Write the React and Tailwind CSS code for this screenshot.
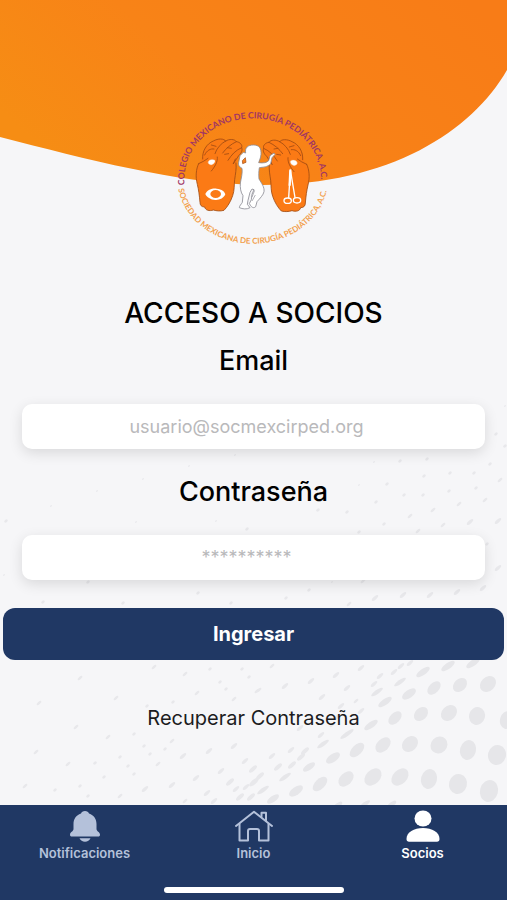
import React from "react";

// [cx, cy, rx, ry] of the large halftone dots
const bigDots = [
  [488, 684, 9, 7], [460, 685, 8, 6], [434, 688, 8, 5], [409, 694, 8, 4], [385, 702, 8, 3], [507, 720, 7, 9],
  [477, 716, 8, 9], [449, 713, 9, 7], [421, 714, 8, 6], [395, 718, 8, 5], [371, 725, 8, 3], [347, 734, 8, 2], [323, 744, 7, 2],
  [497, 755, 9, 10], [468, 750, 8, 10], [439, 745, 9, 8], [410, 744, 9, 7], [383, 745, 9, 6], [357, 750, 9, 5], [333, 758, 8, 4],
  [309, 767, 7, 3], [285, 777, 7, 2], [263, 790, 7, 2],
  [489, 791, 9, 11], [458, 784, 9, 10], [429, 779, 8, 10], [400, 777, 10, 7], [373, 777, 10, 7], [346, 779, 9, 6], [320, 784, 9, 5],
  [296, 791, 8, 4], [273, 799, 7, 3], [473, 663, 8, 3], [448, 666, 8, 3], [423, 672, 8, 3], [400, 682, 7, 2], [377, 692, 7, 2],
  [365, 804, 6, 2], [392, 804, 5, 2], [338, 805, 5, 2],
];

// [cx, cy, rx] of the small halftone dots
const smallDots = [
  [403, 595, 4], [430, 595, 4], [457, 592, 4], [375, 598, 4], [349, 604, 3], [483, 588, 4], [272, 666, 3], [361, 668, 4], [336, 675, 4],
  [311, 681, 4], [285, 686, 4], [259, 690, 3], [347, 688, 4], [322, 697, 4], [361, 711, 4], [337, 717, 4], [300, 728, 4],
  [80, 678, 3], [154, 667, 3], [185, 674, 3], [39, 703, 3], [116, 698, 3], [76, 727, 3], [36, 752, 3], [108, 737, 3], [68, 764, 3],
  [25, 786, 3], [55, 790, 2], [95, 763, 2], [120, 757, 2], [134, 734, 2], [147, 706, 2], [173, 702, 2], [197, 693, 3], [210, 669, 2],
  [220, 682, 2], [242, 669, 2], [249, 677, 2], [226, 689, 2], [234, 699, 3], [257, 691, 3], [144, 746, 2], [150, 754, 2], [128, 766, 2],
  [165, 749, 2], [172, 741, 3], [183, 756, 4], [209, 751, 4], [234, 746, 4], [158, 764, 3], [134, 774, 2], [196, 778, 4], [221, 771, 4],
  [245, 761, 4], [172, 785, 4], [145, 789, 4], [120, 796, 3], [104, 777, 2], [80, 786, 2], [88, 796, 2], [207, 793, 4], [230, 782, 5],
  [185, 801, 3], [214, 801, 4], [236, 789, 4], [246, 787, 4], [253, 769, 5], [260, 776, 5], [240, 797, 5], [254, 782, 6], [251, 797, 5],
  [272, 756, 4], [291, 750, 4], [305, 751, 5], [301, 757, 5], [278, 767, 5], [292, 765, 5], [321, 735, 4], [332, 725, 3], [341, 706, 4],
  [356, 701, 3], [374, 684, 4], [380, 676, 4], [394, 672, 4], [401, 666, 4], [410, 663, 4],
  [6, 521, 2], [51, 506, 1], [97, 491, 1], [143, 479, 1], [136, 522, 1], [216, 521, 1], [247, 529, 2], [4, 575, 1], [88, 582, 2],
  [43, 602, 2], [123, 603, 2], [198, 593, 2], [231, 603, 2], [318, 510, 2], [347, 512, 2], [376, 502, 2], [404, 495, 2], [384, 524, 2],
  [359, 532, 2], [410, 516, 3], [418, 531, 3], [433, 510, 3], [443, 525, 3], [459, 504, 3], [470, 522, 4], [485, 500, 3], [498, 521, 4],
  [500, 480, 3], [476, 488, 2], [449, 491, 2], [423, 495, 2], [424, 476, 2], [450, 473, 2], [474, 473, 2], [387, 484, 2], [359, 485, 1],
  [286, 598, 2], [309, 590, 2], [332, 582, 1], [363, 581, 3], [498, 568, 4], [490, 464, 2], [427, 459, 2], [400, 461, 2], [374, 462, 1],
  [496, 434, 2], [505, 446, 2], [505, 406, 1], [235, 455, 1], [189, 466, 1], [487, 544, 2],
];

function Background() {
  return (
    <svg
      aria-hidden="true"
      className="absolute inset-0 h-full w-full"
      viewBox="0 0 507 900"
      preserveAspectRatio="none"
    >
      <defs>
        <linearGradient id="orange" x1="0" y1="0.6" x2="1" y2="0.2">
          <stop offset="0" stopColor="#f68d14" />
          <stop offset="0.4" stopColor="#f88317" />
          <stop offset="1" stopColor="#f87c17" />
        </linearGradient>
      </defs>
      <path d="M0 0H507V70C472 131 390 185 262 185C180 184 90 160 0 137Z" fill="url(#orange)" />
      <g fill="#e6e6e9">
        {bigDots.map(([x, y, rx, ry]) => (
          <ellipse key={`${x}-${y}`} cx={x} cy={y} rx={rx} ry={ry} transform={`rotate(${ry > rx ? 15 : ry > 4 ? -45 : -35} ${x} ${y})`} />
        ))}
      </g>
      <g fill="#e8e8eb">
        {smallDots.map(([x, y, r]) => (
          <ellipse key={`${x}-${y}`} cx={x} cy={y} rx={r} ry={r > 2 ? r * 0.4 : r * 0.7} transform={`rotate(-42 ${x} ${y})`} />
        ))}
      </g>
    </svg>
  );
}

function Hand() {
  return (
    <g stroke="#a04a12" strokeWidth="2.5" strokeLinejoin="round" strokeLinecap="round">
      <path
        fill="#fb7a15"
        stroke="none"
        d="M108 322C106 300 104 285 100 268C94 245 96 222 104 206C112 198 114 190 116 178C120 158 134 144 150 137C162 129 180 128 184 137C196 131 212 132 217 140C228 141 236 150 234 158C236 168 232 172 226 178C222 188 220 196 216 204C218 222 214 238 212 254C210 272 212 284 206 302C200 320 190 336 180 346C168 349 158 348 148 345C136 349 124 346 122 336C112 336 108 330 108 322Z"
      />
      <path
        fill="none"
        d="M104 206C96 222 94 245 100 268C104 285 106 300 108 322C108 330 112 336 122 336C124 346 136 349 148 345C158 348 168 349 180 346C190 336 200 320 206 302C212 284 210 272 212 254C214 238 218 222 216 204"
      />
      <path
        fill="none"
        d="M116 192C114 168 128 146 148 138C162 130 180 130 185 138M185 138C196 131 212 132 217 140C228 141 236 150 233 158C237 168 230 176 224 182L208 206M185 138C170 146 158 160 153 176M217 140C200 148 186 160 176 174M233 158C214 166 202 180 192 196M122 180C128 166 140 160 150 162M104 206C114 202 124 196 132 190M160 186C162 200 152 216 142 228M142 150L156 154M190 158L202 160M182 178L194 176M208 206L214 192"
      />
      <path fill="#fff" stroke="#f4b183" strokeWidth="1" d="M132 202C133 194 144 191 152 195C156 201 149 208 141 210C136 209 132 206 132 202Z" />
    </g>
  );
}

function Logo() {
  return (
    <svg
      role="img"
      aria-label="Colegio Mexicano de Cirugía Pediátrica"
      viewBox="0 0 540 480"
      className="h-40 w-[180px] font-['Lato',sans-serif]"
    >
      <defs>
        <path id="ringTop" d="M62 270A205 182 0 1 1 470 270" />
        <path id="ringBottom" d="M43 282A226 196 0 0 0 489 282" />
      </defs>
      <text fill="#a03565" fontSize="26" fontWeight="700">
        <textPath href="#ringTop">COLEGIO MEXICANO DE CIRUGÍA PEDIÁTRICA, A.C.</textPath>
      </text>
      <text fill="#f2a04c" fontSize="24" fontWeight="700">
        <textPath href="#ringBottom">SOCIEDAD MEXICANA DE CIRUGÍA PEDIÁTRICA, A.C.</textPath>
      </text>
      <Hand />
      <g transform="translate(532 2) scale(-1 1)">
        <Hand />
      </g>
      <path
        fill="#fff"
        fillRule="evenodd"
        d="M124 297C130 284 146 279 158 281C174 282 182 290 184 298C180 309 166 316 154 315C140 314 128 307 124 297ZM139 297A16 12 0 1 0 171 297A16 12 0 1 0 139 297Z"
      />
      <g fill="none" stroke="#fff" strokeWidth="4" strokeLinecap="round">
        <path strokeWidth="7" d="M379 226L377 270" />
        <path d="M379 230L374 308M380 230L393 308" />
        <ellipse cx="371" cy="317" rx="11" ry="8" />
        <ellipse cx="399" cy="316" rx="11" ry="8" />
      </g>
      <path
        fill="#fff"
        stroke="#8b8b94"
        strokeWidth="2.5"
        strokeLinejoin="round"
        d="M245 174C242 158 252 150 268 150C286 150 292 160 291 178C290 190 286 196 284 203C298 205 308 203 314 197L318 182L330 174L333 178L324 188L320 206C310 217 298 216 286 218C284 230 284 240 285 252C292 264 302 276 300 290C298 300 288 310 279 320L275 335C270 340 264 338 260 332L256 326L262 314L264 298L270 284L264 282L258 292L252 316L250 328L258 338C248 344 236 342 226 338C226 332 232 328 235 322L237 302C230 292 228 278 229 264C232 248 236 234 234 220C226 216 222 210 224 202L228 182L238 172Z"
      />
      <path d="M244 188L235 197L236 206L246 202Z" fill="#f58220" stroke="#a04a12" strokeWidth="2" />
      <path d="M272 286L264 306M274 300L264 318" stroke="#8b8b94" strokeWidth="2" />
    </svg>
  );
}

function BellIcon() {
  return (
    <svg viewBox="0 0 32 32" className="h-8 w-8" fill="currentColor" aria-hidden="true">
      <path d="M16 1C18 1 19.600 2 20 3.400C25 5 27.500 9 27.500 14V19C27.500 21.500 31 22 31 24.500C31 26 30.500 26.600 29 26.600H3C1.500 26.600 1 26 1 24.500C1 22 4.500 21.500 4.500 19V14C4.500 9 7 5 12 3.400C12.400 2 14 1 16 1Z" />
      <path d="M10.500 28.300H21.500C20.500 30.700 18.500 31.700 16 31.700C13.500 31.700 11.500 30.700 10.500 28.300Z" />
    </svg>
  );
}

function HomeIcon() {
  return (
    <svg viewBox="0 0 40 32" className="h-8 w-10" fill="none" stroke="currentColor" strokeWidth="2" strokeLinejoin="round" strokeLinecap="round" aria-hidden="true">
      <path d="M5.500 14V30.500H14V21C14 19.800 14.800 19 16 19H23C24.200 19 25 19.800 25 21V30.500H34.500V14" />
      <path d="M2 16L20 1.800L38 16" />
      <path d="M27.500 6.500V2.800H32V10.500" />
    </svg>
  );
}

function PersonIcon() {
  return (
    <svg viewBox="0 0 34 32" className="h-8 w-[34px]" fill="currentColor" aria-hidden="true">
      <ellipse cx="17" cy="8.500" rx="8.500" ry="8" />
      <path d="M0.500 29C0.500 22 8 18 17 18S33.500 22 33.500 29C33.500 31 32.500 31.700 31 31.700H3C1.500 31.700 0.500 31 0.500 29Z" />
    </svg>
  );
}

const tabs = [
  { label: "Notificaciones", Icon: BellIcon, color: "text-[#b4c1da]" },
  { label: "Inicio", Icon: HomeIcon, color: "text-[#b4c1da]" },
  { label: "Socios", Icon: PersonIcon, color: "text-white" },
];

const fieldClass =
  "h-[45px] w-full rounded-[10px] bg-white pr-[14px] text-center text-lg text-black shadow-[0_4px_14px_rgba(0,0,0,0.12)] outline-none placeholder:text-[#b9b9bb]";

export default function App() {
  return (
    <div className="relative flex min-h-screen flex-col bg-[#f6f6f8] font-['Inter',sans-serif] text-black">
      <Background />
      <main className="relative flex grow flex-col items-center pt-[95px]">
        <Logo />
        <form className="flex w-full flex-col items-center pt-10" onSubmit={(e) => e.preventDefault()}>
          <h1 className="text-[28px] leading-9 font-medium">ACCESO A SOCIOS</h1>
          <div className="flex w-full flex-col items-center gap-[25px] px-[22px] pt-3">
            <label htmlFor="email" className="text-[27px] leading-9 font-medium">Email</label>
            <input id="email" type="email" placeholder="usuario@socmexcirped.org" className={fieldClass} />
            <label htmlFor="password" className="text-[27px] leading-9 font-medium">Contraseña</label>
            <input id="password" type="password" placeholder="**********" className={fieldClass} />
          </div>
          <div className="w-full px-[3px] pt-7">
            <button type="submit" className="h-[52px] w-full rounded-xl bg-[#203864] text-xl font-bold text-white">
              Ingresar
            </button>
          </div>
        </form>
        <a href="#recuperar" className="mt-11 text-xl text-[#1c1c1e]">Recuperar Contraseña</a>
      </main>
      <nav className="relative flex h-[95px] flex-col items-center justify-between bg-[#203864] pt-[5px] pb-[7px]">
        <div className="grid w-full grid-cols-3">
          {tabs.map(({ label, Icon, color }) => (
            <button key={label} type="button" className={`flex flex-col items-center gap-px text-[13px] leading-5 font-semibold ${color}`}>
              <Icon />
              {label}
            </button>
          ))}
        </div>
        <div className="h-[6px] w-[180px] rounded-full bg-white" />
      </nav>
    </div>
  );
}
